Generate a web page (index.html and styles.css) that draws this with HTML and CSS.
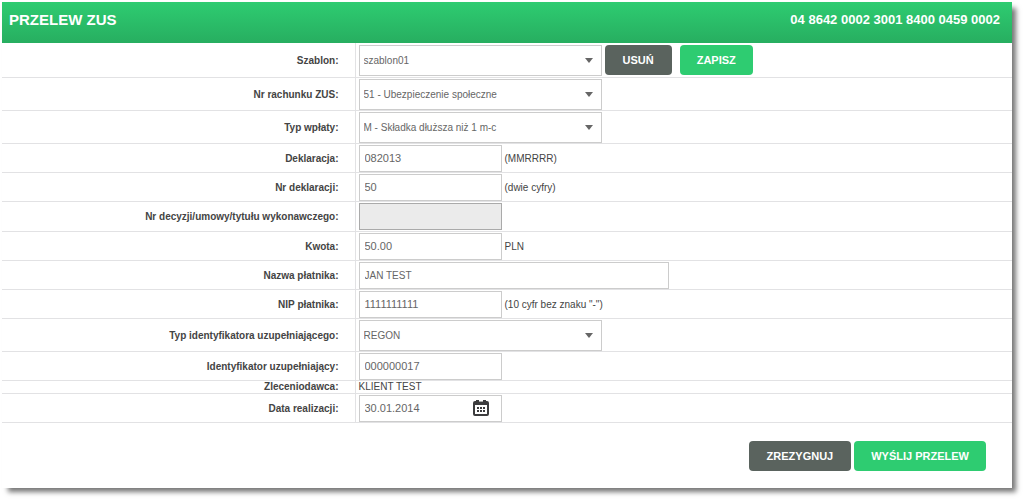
FILE: index.html
```html
<!DOCTYPE html>
<html lang="pl">
<head>
<meta charset="utf-8">
<title>Przelew ZUS</title>
<meta name="viewport" content="width=device-width, initial-scale=1">
<link rel="stylesheet" href="styles.css">
</head>
<body>
<main class="panel">
  <header class="panel-header">
    <h1 class="title">PRZELEW ZUS</h1>
    <span class="account">04 8642 0002 3001 8400 0459 0002</span>
  </header>
  <form class="form">
    <div class="row row-first">
      <label class="label" for="szablon">Szablon:</label>
      <div class="field">
        <span class="select-wrap"><select class="control select" id="szablon"><option>szablon01</option></select><svg class="arrow" viewBox="0 0 8 5"><path d="M0 0h8L4 5z"/></svg></span>
        <div class="row-actions">
          <button class="btn btn-dark" type="button">USUŃ</button>
          <button class="btn btn-green" type="button">ZAPISZ</button>
        </div>
      </div>
    </div>
    <div class="row row-select">
      <label class="label" for="rachunek">Nr rachunku ZUS:</label>
      <div class="field">
        <span class="select-wrap"><select class="control select" id="rachunek"><option>51 - Ubezpieczenie społeczne</option></select><svg class="arrow" viewBox="0 0 8 5"><path d="M0 0h8L4 5z"/></svg></span>
      </div>
    </div>
    <div class="row row-select">
      <label class="label" for="typ">Typ wpłaty:</label>
      <div class="field">
        <span class="select-wrap"><select class="control select" id="typ"><option>M - Składka dłuższa niż 1 m-c</option></select><svg class="arrow" viewBox="0 0 8 5"><path d="M0 0h8L4 5z"/></svg></span>
      </div>
    </div>
    <div class="row">
      <label class="label" for="deklaracja">Deklaracja:</label>
      <div class="field"><input class="control" id="deklaracja" type="text" value="082013"><span class="hint">(MMRRRR)</span></div>
    </div>
    <div class="row">
      <label class="label" for="nr">Nr deklaracji:</label>
      <div class="field"><input class="control" id="nr" type="text" value="50"><span class="hint">(dwie cyfry)</span></div>
    </div>
    <div class="row row-disabled">
      <label class="label" for="decyzja">Nr decyzji/umowy/tytułu wykonawczego:</label>
      <div class="field"><input class="control" id="decyzja" type="text" disabled></div>
    </div>
    <div class="row">
      <label class="label" for="kwota">Kwota:</label>
      <div class="field"><input class="control" id="kwota" type="text" value="50.00"><span class="hint">PLN</span></div>
    </div>
    <div class="row">
      <label class="label" for="nazwa">Nazwa płatnika:</label>
      <div class="field"><input class="control control-wide" id="nazwa" type="text" value="JAN TEST"></div>
    </div>
    <div class="row">
      <label class="label" for="nip">NIP płatnika:</label>
      <div class="field"><input class="control" id="nip" type="text" value="1111111111"><span class="hint">(10 cyfr bez znaku "-")</span></div>
    </div>
    <div class="row row-select">
      <label class="label" for="typid">Typ identyfikatora uzupełniającego:</label>
      <div class="field">
        <span class="select-wrap"><select class="control select" id="typid"><option>REGON</option></select><svg class="arrow" viewBox="0 0 8 5"><path d="M0 0h8L4 5z"/></svg></span>
      </div>
    </div>
    <div class="row">
      <label class="label" for="ident">Identyfikator uzupełniający:</label>
      <div class="field"><input class="control" id="ident" type="text" value="000000017"></div>
    </div>
    <div class="row row-text">
      <span class="label">Zleceniodawca:</span>
      <div class="field"><span class="value">KLIENT TEST</span></div>
    </div>
    <div class="row">
      <label class="label" for="data">Data realizacji:</label>
      <div class="field">
        <span class="date-wrap"><input class="control" id="data" type="text" value="30.01.2014"><button class="calendar" type="button" aria-label="Kalendarz"><svg class="calendar-icon" viewBox="0 0 16 16"><rect x="1" y="2" width="14" height="13" rx="1" fill="none" stroke="#3c3c3e" stroke-width="2"/><path d="M1 2h14v3H1zM3 0h3v3H3zM10 0h3v3h-3z" fill="#3c3c3e"/><path d="M6 1h4v1H6z" fill="#aaa"/><path d="M4 7h2v2H4zM7 7h2v2H7zM10 7h2v2h-2zM4 10h2v2H4zM7 10h2v2H7zM10 10h2v2h-2z" fill="#3c3c3e"/></svg></button></span>
      </div>
    </div>
    <div class="actions">
      <button class="btn btn-dark" type="button">ZREZYGNUJ</button>
      <button class="btn btn-green" type="submit">WYŚLIJ PRZELEW</button>
    </div>
  </form>
</main>
</body>
</html>
```
FILE: styles.css
```css
* { box-sizing: border-box; }

body {
  margin: 0;
  padding: 2px 12px 12px 2px;
  background: #fff;
  color: #444;
  font: 10px/13px "Liberation Sans", Arial, sans-serif;
}

.panel {
  background: #fff;
  box-shadow: 5px 5px 5px -1px #777;
}

.panel-header {
  display: flex;
  justify-content: space-between;
  align-items: center;
  padding: 10px 12px 15px 7px;
  background: linear-gradient(#2ecc71, #27ae60);
  color: #fff;
  font-size: 13px;
  font-weight: bold;
  line-height: 16px;
}

.title {
  margin: 0;
  font-size: 15px;
}

.row {
  display: grid;
  grid-template-columns: 35% 1fr;
  min-height: 29px;
  border-bottom: 1px solid #e2e2e4;
}

.row-first { min-height: 35px; }
.row-select { min-height: 33px; }
.row-disabled { min-height: 30px; }
.row-text { min-height: 13px; }

.label {
  display: flex;
  align-items: center;
  justify-content: flex-end;
  padding-right: 16px;
  border-right: 1px solid #e2e2e4;
  font-weight: bold;
}

.field {
  display: flex;
  align-items: center;
  padding-left: 3px;
}

.row-text .label,
.row-text .field { line-height: 12px; }

.control {
  width: 143px;
  height: 27px;
  padding: 0 5px;
  border: 1px solid #ccc;
  border-radius: 0;
  background: #fff;
  color: #666;
  font: inherit;
  font-size: 11px;
}

.control:disabled {
  border-color: #aaa;
  background: #ebebeb;
}

.control-wide {
  width: 310px;
  font-size: 10px;
}

.select-wrap,
.date-wrap {
  position: relative;
  display: flex;
}

.select {
  width: 243px;
  height: 31px;
  padding: 0 4px;
  appearance: none;
  font-size: 10px;
}

.arrow {
  position: absolute;
  top: 13px;
  right: 9px;
  width: 8px;
  height: 5px;
  fill: #666;
  pointer-events: none;
}

.hint { padding-left: 3px; }

.row-actions {
  display: flex;
  gap: 8px;
  padding-left: 3px;
}

.calendar {
  position: absolute;
  top: 5px;
  right: 13px;
  padding: 0;
  border: 0;
  background: none;
}

.calendar-icon {
  display: block;
  width: 16px;
  height: 16px;
}

.btn {
  height: 30px;
  padding: 0 17px;
  border: 0;
  border-radius: 4px;
  color: #fff;
  font: bold 11px/13px "Liberation Sans", Arial, sans-serif;
}

.btn-dark {
  padding: 0 18px;
  background: #5a635e;
}

.btn-green { background: #2ecc71; }

.actions {
  display: flex;
  justify-content: flex-end;
  gap: 3px;
  padding: 18px 26px 17px;
}
```
